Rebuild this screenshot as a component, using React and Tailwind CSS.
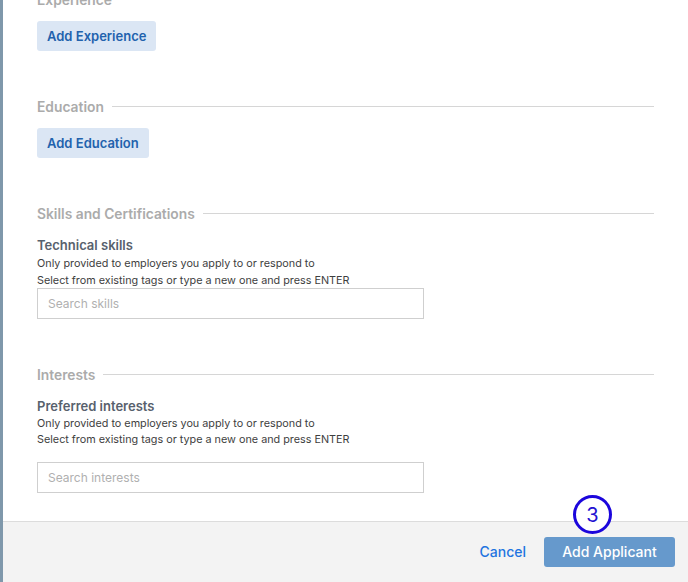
import React from 'react'

const SectionHeading = ({ title }) => (
  <div className="flex items-center gap-2 h-5 pt-[1px]">
    <h3 className="text-[13.8px] font-semibold text-[#ababab] leading-5 whitespace-nowrap">{title}</h3>
    <div className="flex-1 h-px bg-[#d6d6d6]" />
  </div>
)

const SoftButton = ({ children }) => (
  <button className="h-[30px] px-[10px] pt-[1px] rounded-[3px] bg-[#dbe6f4] text-[13px] font-semibold text-[#2262ad]">
    {children}
  </button>
)

const SearchInput = ({ placeholder }) => (
  <input
    className="w-[387px] h-[31px] border border-[#cfcfcf] bg-white px-[10px] text-[12px] text-[#333] placeholder:text-[#b0b0b0] outline-none"
    placeholder={placeholder}
  />
)

const App = () => {
  return (
    <div
      className="relative flex w-[688px] h-[582px] overflow-hidden bg-white"
      style={{ fontFamily: 'Inter, "Open Sans", sans-serif' }}
    >
      <div className="w-[3px] bg-[#7f98ab]" />

      <div className="flex-1 flex flex-col">
        <div className="flex-1 overflow-hidden px-[34px]">
          <div className="-mt-[11px]">
            <SectionHeading title="Experience" />
            <div className="mt-3">
              <SoftButton>Add Experience</SoftButton>
            </div>
          </div>

          <div className="mt-[45px]">
            <SectionHeading title="Education" />
            <div className="mt-3">
              <SoftButton>Add Education</SoftButton>
            </div>
          </div>

          <div className="mt-[45px]">
            <SectionHeading title="Skills and Certifications" />
            <div className="mt-3 pt-[1px] text-[13px] font-semibold leading-[18px] text-[#58616d]">Technical skills</div>
            <p className="mt-[1px] text-[10.8px] leading-[17px] text-[#3e3e3e]">Only provided to employers you apply to or respond to</p>
            <p className="text-[10.8px] leading-[17px] text-[#3e3e3e]">Select from existing tags or type a new one and press ENTER</p>
            <div className="-mt-[1px]">
              <SearchInput placeholder="Search skills" />
            </div>
          </div>

          <div className="mt-[45px]">
            <SectionHeading title="Interests" />
            <div className="mt-3 pt-[1px] text-[13px] font-semibold leading-[18px] text-[#58616d]">Preferred interests</div>
            <p className="mt-[1px] text-[10.8px] leading-4 text-[#3e3e3e]">Only provided to employers you apply to or respond to</p>
            <p className="text-[10.8px] leading-4 text-[#3e3e3e]">Select from existing tags or type a new one and press ENTER</p>
            <div className="mt-[14px]">
              <SearchInput placeholder="Search interests" />
            </div>
          </div>
        </div>

        <div className="h-[61px] border-t border-[#dcdcdc] bg-[#f3f3f3] flex items-center justify-end gap-[18px] pr-[13px]">
          <button className="pb-[2px] text-[14px] font-medium text-[#1f74e0]">Cancel</button>
          <button className="h-[30px] w-[131px] pb-[2px] rounded-[3px] bg-[#6699cc] text-[14px] font-medium text-white">
            Add Applicant
          </button>
        </div>
      </div>

      <div className="absolute left-[573px] top-[495px] w-[39px] h-[39px] rounded-full border-[3.5px] border-[#1c06dc] bg-white flex items-center justify-center text-[20px] text-[#2412d2]">
        3
      </div>
    </div>
  )
}

export default App
